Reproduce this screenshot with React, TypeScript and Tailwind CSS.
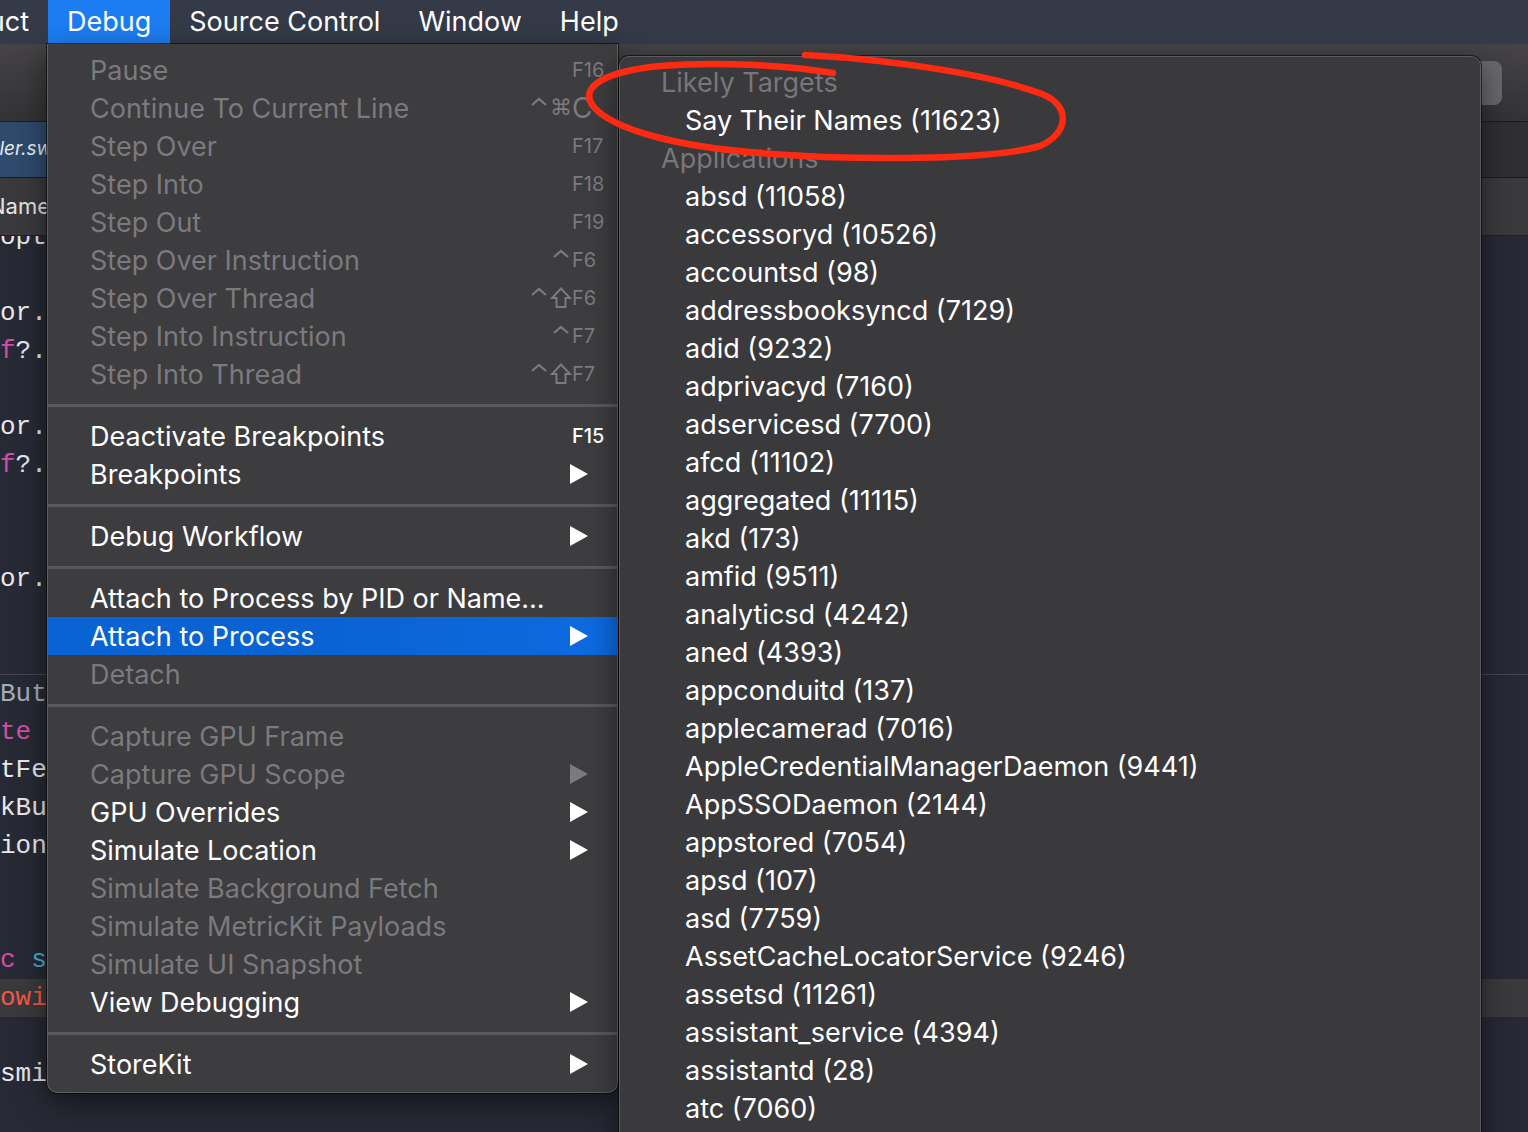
import React from "react";

type MenuItem = {
  label: string;
  mods?: string[];
  keyName?: string;
  arrow?: boolean;
  dis?: boolean;
  active?: boolean;
};

const SEP = "sep" as const;

const debugItems: (MenuItem | typeof SEP)[] = [
  { label: "Pause", keyName: "F16", dis: true },
  { label: "Continue To Current Line", mods: ["ctrl", "cmd"], keyName: "C", dis: true },
  { label: "Step Over", keyName: "F17", dis: true },
  { label: "Step Into", keyName: "F18", dis: true },
  { label: "Step Out", keyName: "F19", dis: true },
  { label: "Step Over Instruction", mods: ["ctrl"], keyName: "F6", dis: true },
  { label: "Step Over Thread", mods: ["ctrl", "shift"], keyName: "F6", dis: true },
  { label: "Step Into Instruction", mods: ["ctrl"], keyName: "F7", dis: true },
  { label: "Step Into Thread", mods: ["ctrl", "shift"], keyName: "F7", dis: true },
  SEP,
  { label: "Deactivate Breakpoints", keyName: "F15" },
  { label: "Breakpoints", arrow: true },
  SEP,
  { label: "Debug Workflow", arrow: true },
  SEP,
  { label: "Attach to Process by PID or Name…" },
  { label: "Attach to Process", arrow: true, active: true },
  { label: "Detach", dis: true },
  SEP,
  { label: "Capture GPU Frame", dis: true },
  { label: "Capture GPU Scope", dis: true, arrow: true },
  { label: "GPU Overrides", arrow: true },
  { label: "Simulate Location", arrow: true },
  { label: "Simulate Background Fetch", dis: true },
  { label: "Simulate MetricKit Payloads", dis: true },
  { label: "Simulate UI Snapshot", dis: true },
  { label: "View Debugging", arrow: true },
  SEP,
  { label: "StoreKit", arrow: true },
];

const processes = [
  "absd (11058)",
  "accessoryd (10526)",
  "accountsd (98)",
  "addressbooksyncd (7129)",
  "adid (9232)",
  "adprivacyd (7160)",
  "adservicesd (7700)",
  "afcd (11102)",
  "aggregated (11115)",
  "akd (173)",
  "amfid (9511)",
  "analyticsd (4242)",
  "aned (4393)",
  "appconduitd (137)",
  "applecamerad (7016)",
  "AppleCredentialManagerDaemon (9441)",
  "AppSSODaemon (2144)",
  "appstored (7054)",
  "apsd (107)",
  "asd (7759)",
  "AssetCacheLocatorService (9246)",
  "assetsd (11261)",
  "assistant_service (4394)",
  "assistantd (28)",
  "atc (7060)",
];

// visible slivers of the editor behind the menus
type Frag = { parts: [string, string][]; hl?: boolean };
const W = "text-[#e8e8ea]";
const PINK = "text-[#cf4fa2]";
const codeTop: Frag[] = [
  { parts: [["opt", W]] },
  { parts: [] },
  { parts: [["or.", W]] },
  { parts: [["f", PINK], ["?.", W]] },
  { parts: [] },
  { parts: [["or.", W]] },
  { parts: [["f", PINK], ["?.", W]] },
  { parts: [] },
  { parts: [] },
  { parts: [["or.", W]] },
  { parts: [] },
  { parts: [] },
];
const codeBottom: Frag[] = [
  { parts: [["But", "text-[#a3acba]"]] },
  { parts: [["te", PINK]] },
  { parts: [["tFe", W]] },
  { parts: [["kBu", W]] },
  { parts: [["ion", W]] },
  { parts: [] },
  { parts: [] },
  { parts: [["c ", PINK], ["s", "text-[#4aaecb]"]] },
  { parts: [["owi", "text-[#f5584a]"]], hl: true },
  { parts: [] },
  { parts: [["smi", W]] },
  { parts: [] },
];

function CodeLines({ lines }: { lines: Frag[] }) {
  return (
    <>
      {lines.map((l, i) => (
        <div
          key={i}
          className={`h-[38px] flex items-center whitespace-pre font-['Liberation_Mono',monospace] text-[26px] ${
            l.hl ? "bg-[#3a3a3d]" : ""
          }`}
        >
          {l.parts.map(([t, c], j) => (
            <span key={j} className={c}>
              {t}
            </span>
          ))}
        </div>
      ))}
    </>
  );
}

function Triangle({ dim }: { dim?: boolean }) {
  return (
    <svg width="18" height="20" viewBox="0 0 18 20">
      <polygon points="0,0 18,10 0,20" fill={dim ? "#7b7a7e" : "#ffffff"} />
    </svg>
  );
}

function ModKey({ name }: { name: string }) {
  const c = "#7b7a7e";
  if (name === "ctrl")
    return (
      <svg width="22" height="24" viewBox="0 0 22 24">
        <polyline points="4,9 11,3 18,9" fill="none" stroke={c} strokeWidth="2.2" />
      </svg>
    );
  if (name === "shift")
    return (
      <svg width="22" height="24" viewBox="0 0 22 24">
        <path d="M11 2.5 L20 12 L15.5 12 L15.5 21 L6.5 21 L6.5 12 L2 12 Z" fill="none" stroke={c} strokeWidth="2" strokeLinejoin="miter" />
      </svg>
    );
  return (
    <span className="w-[22px] text-center text-[22px] leading-none font-['DejaVu_Sans',sans-serif]">⌘</span>
  );
}

function DebugRow({ item }: { item: MenuItem }) {
  const color = item.dis ? "text-[#7b7a7e]" : "text-white";
  return (
    <div
      className={`h-[38px] flex items-center pl-[42px] ${color} ${
        item.active ? "bg-gradient-to-r from-[#0a63d2] via-[#0a63d2] to-[#0d6ae0]" : ""
      }`}
    >
      <span className="flex-1 text-[27px] leading-none whitespace-nowrap">{item.label}</span>
      {item.arrow && (
        <span className="pr-[29px] flex items-center">
          <Triangle dim={item.dis} />
        </span>
      )}
      {item.keyName && (
        <span className="flex items-center pr-[9px]">
          {item.mods && item.mods.length === 1 && <span className="w-[4px]" />}
          {item.mods?.map((m, i) => (
            <span key={i} className="w-[22px] flex justify-center">
              <ModKey name={m} />
            </span>
          ))}
          <span
            className={`w-[36px] leading-none ${
              item.keyName === "C" ? "text-[28px]" : "text-[20px]"
            } ${item.dis ? "" : "font-medium"}`}
          >
            {item.keyName}
          </span>
        </span>
      )}
    </div>
  );
}

function DebugMenu() {
  return (
    <div className="absolute left-[47px] top-[44px] w-[571px] pt-[7px] pb-[9px] bg-[#3d3c3f] border border-t-0 border-[#5f5e62] rounded-b-[10px] shadow-[0_0_0_1px_rgba(0,0,0,0.55),0_10px_30px_rgba(0,0,0,0.5)]">
      {debugItems.map((it, i) =>
        it === SEP ? (
          <div key={i} className="h-[24px] flex items-center">
            <div className="h-[3px] w-full bg-[#5a595d]" />
          </div>
        ) : (
          <DebugRow key={i} item={it} />
        )
      )}
    </div>
  );
}

function ProcessMenu() {
  return (
    <div className="absolute left-[619px] top-[56px] w-[862px] h-[1100px] pt-[7px] bg-[#3a393c] border border-[#5d5c60] rounded-t-[10px] shadow-[0_0_0_1px_rgba(0,0,0,0.55),0_10px_30px_rgba(0,0,0,0.5)]">
      <div className="h-[38px] flex items-center pl-[41px] text-[27px] text-[#77767a]">Likely Targets</div>
      <div className="h-[38px] flex items-center pl-[65px] text-[27px] text-white">Say Their Names (11623)</div>
      <div className="h-[38px] flex items-center pl-[41px] text-[27px] text-[#77767a]">Applications</div>
      {processes.map((p) => (
        <div key={p} className="h-[38px] flex items-center pl-[65px] text-[27px] text-white whitespace-nowrap">
          {p}
        </div>
      ))}
    </div>
  );
}

function MenuBar() {
  const items = ["Source Control", "Window", "Help"];
  return (
    <div className="h-[44px] flex items-stretch bg-[#343a47] text-[27px] text-white">
      <div className="w-[48px] overflow-hidden flex items-center justify-end pr-[19px] whitespace-nowrap">
        uct
      </div>
      <div className="flex items-center px-[19px] bg-[#1b7df1]">Debug</div>
      {items.map((t) => (
        <div key={t} className="flex items-center px-[19px] whitespace-nowrap">
          {t}
        </div>
      ))}
    </div>
  );
}

function Annotation() {
  return (
    <svg className="absolute inset-0 pointer-events-none" width="1528" height="1132" viewBox="0 0 1528 1132">
      <path
        d="M 805 55 C 900 60, 995 76, 1042 94 C 1072 106, 1068 134, 1040 146 C 990 160, 860 161, 760 153 C 680 147, 612 130, 593 106 C 578 86, 608 71, 660 66 C 722 61, 792 66, 833 73"
        fill="none"
        stroke="#ff2a12"
        strokeWidth="6.5"
        strokeLinecap="round"
        strokeLinejoin="round"
      />
    </svg>
  );
}

export default function App() {
  return (
    <div className="relative w-[1528px] h-[1132px] overflow-hidden bg-[#272a35] font-['Inter','Noto_Sans',sans-serif]">
      <MenuBar />
      {/* toolbar */}
      <div className="h-[78px] flex items-center justify-end pr-[26px] bg-gradient-to-b from-[#454345] to-[#333234] border-b border-[#1c1c1e]">
        <div className="w-[60px] h-[44px] rounded-[8px] bg-[#68676b]" />
      </div>
      {/* tab bar */}
      <div className="h-[56px] flex bg-[#2f2f31] border-b border-[#1c1c1e]">
        <div className="w-[300px] flex items-center justify-end pr-[248px] bg-[#2f4a6d] overflow-hidden">
          <span className="italic text-[19px] text-[#e8ecf2] whitespace-nowrap">Controller.sw</span>
        </div>
      </div>
      {/* jump bar */}
      <div className="h-[58px] flex items-center bg-[#3a3a3c] border-b border-[#222]">
        <div className="w-[50px] overflow-hidden flex justify-end">
          <span className="text-[22px] text-[#e6e6e6] whitespace-nowrap">Name</span>
        </div>
      </div>
      {/* editor */}
      <div className="h-[439px] overflow-hidden border-b border-[#454752]">
        <div className="-mt-[18px]">
          <CodeLines lines={codeTop} />
        </div>
      </div>
      <div>
        <CodeLines lines={codeBottom} />
      </div>

      <DebugMenu />
      <ProcessMenu />
      <Annotation />
    </div>
  );
}
